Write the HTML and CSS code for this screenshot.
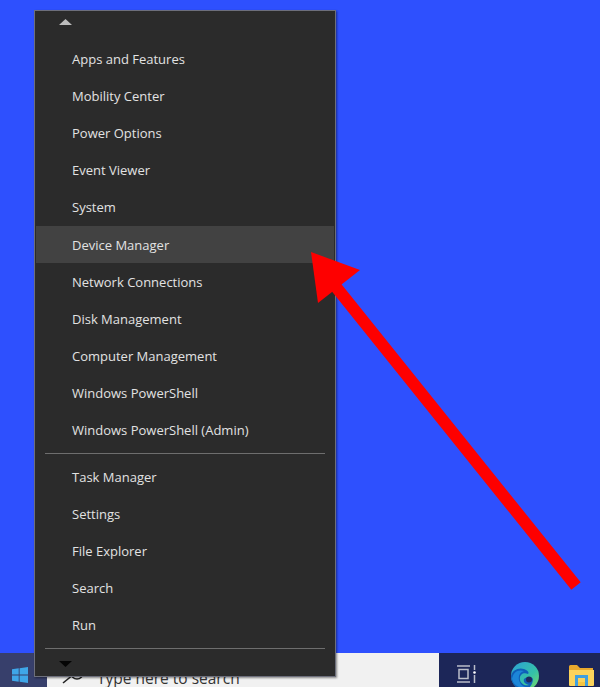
FILE: index.html
```html
<!DOCTYPE html>
<html lang="en">
<head>
<meta charset="utf-8">
<title>Quick Link menu</title>
<link rel="stylesheet" href="styles.css">
</head>
<body>
<div class="desktop">
  <nav class="menu">
    <div class="scroll scroll-up"><svg class="tri" width="13" height="6" viewBox="0 0 13 6"><path d="M6.500 0 13 6H0z" fill="#bdbdbd"/></svg></div>
    <ul class="group">
      <li>Apps and Features</li>
      <li>Mobility Center</li>
      <li>Power Options</li>
      <li>Event Viewer</li>
      <li>System</li>
      <li class="active">Device Manager</li>
      <li>Network Connections</li>
      <li>Disk Management</li>
      <li>Computer Management</li>
      <li>Windows PowerShell</li>
      <li>Windows PowerShell (Admin)</li>
    </ul>
    <hr class="sep">
    <ul class="group">
      <li>Task Manager</li>
      <li>Settings</li>
      <li>File Explorer</li>
      <li>Search</li>
      <li>Run</li>
    </ul>
    <hr class="sep sep-last">
    <div class="scroll scroll-down"><svg class="tri" width="13" height="6" viewBox="0 0 13 6"><path d="M0 0H13L6.500 6z" fill="#050505"/></svg></div>
  </nav>
  <footer class="taskbar">
    <div class="start">
      <svg width="16" height="16" viewBox="0 0 16 16"><path d="M0 2.300 6.700 1.300V7.500H0zM7.600 1.200 16 0V7.500H7.600zM0 8.400H6.700V14.700L0 13.700zM7.600 8.400H16V16L7.600 14.800z" fill="#3fa6e8"/></svg>
    </div>
    <div class="search">
      <svg class="lens" width="22" height="14" viewBox="0 0 22 14"><path d="M1 12 9 5.500" stroke="#222" stroke-width="1.600" fill="none"/><circle cx="15" cy="2" r="6" stroke="#222" stroke-width="1.600" fill="none"/></svg>
      <span class="placeholder">Type here to search</span>
    </div>
    <div class="tray">
      <svg class="task" width="21" height="18" viewBox="0 0 21 18"><g fill="none" stroke="#b9bdc9" stroke-width="1.500"><path d="M0 1H13M2 4.500H11V13.500H2zM0 17H13"/><path d="M17.500 0V5M17.500 10V18"/></g><circle cx="17.500" cy="7.500" r="1.300" fill="#fff"/></svg>
      <svg class="edge" width="28" height="28" viewBox="0 0 28 28">
        <defs>
          <linearGradient id="edgeTop" x1="0" y1="0" x2="1" y2="1"><stop offset="0" stop-color="#2c9fd8"/><stop offset="0.600" stop-color="#35c1a8"/><stop offset="1" stop-color="#7fdc62"/></linearGradient>
        </defs>
        <circle cx="14" cy="14" r="14" fill="url(#edgeTop)"/>
        <path d="M13 17C17 14 21 15 22 17 22 22 18 28 13 28 6 28 0 22 0 14 1 8 8 5 13 7 18 9 18 11 17 12 12 10 8 13 9 18 10 22 14 24 18 23 14 22 12 20 13 17z" fill="#0f5fb8"/>
        <path d="M1 17C2 10 7 7 13 9 9 10 7 14 8 18 9 22 12 25 15 25 11 27 3 25 1 17z" fill="#1c86d8"/>
        <circle cx="18" cy="17.500" r="3" fill="#1e2a5e"/>
      </svg>
      <svg class="folder" width="25" height="22" viewBox="0 0 25 22"><path d="M0 1.500Q0 0 1.500 0H8L11 3H24V7H0z" fill="#e8a92e"/><path d="M0 5H25V20Q25 21 24 21H1Q0 21 0 20z" fill="#fbd35b"/><path d="M6 10H19V21H16V13H9V21H6z" fill="#3f9fe0"/><path d="M9 17H16V21H9z" fill="#f5c542"/></svg>
    </div>
  </footer>
  <svg class="arrow" width="600" height="687" viewBox="0 0 600 687"><path d="M576 586 332 282" stroke="#fe0000" stroke-width="12" fill="none"/><path d="M311 252 360 270 318 303z" fill="#fe0000"/></svg>
</div>
</body>
</html>
```
FILE: styles.css
```css
* { box-sizing: border-box; }
html, body { margin: 0; padding: 0; }
body { width: 600px; height: 687px; overflow: hidden; font-family: "Open Sans", "Noto Sans", sans-serif; }
.desktop { position: relative; width: 600px; height: 687px; background: #2e50fe; display: flex; flex-direction: column; justify-content: flex-end; }
.menu { position: absolute; left: 34px; top: 10px; width: 302px; height: 667px; background: #2b2b2b; border: 1px solid #6d6f7c; box-shadow: 1px 1px 2px rgba(0,0,0,.45); display: flex; flex-direction: column; padding: 1px; }
.scroll { height: 20px; padding-left: 23px; display: flex; align-items: center; flex: none; }
.scroll-up { height: 20px; }
.group { list-style: none; margin: 0; padding: 0; flex: none; }
.scroll-up + .group { margin-top: 8px; }
.group li { height: 37.200px; padding-left: 36px; display: flex; align-items: center; color: #e2e2e2; font-size: 13px; }
.group li.active { background: #424242; }
.sep { flex: none; height: 1px; margin: 4px 9px 4px; border: 0; background: #6e6e6e; }
.sep-last { margin: 3.500px 9px 5px; }
.taskbar { height: 34px; display: flex; background: #1c2658; flex: none; }
.start { width: 47px; display: flex; align-items: flex-start; background: #373f6b; padding: 14px 0 0 12px; }
.search { width: 392px; background: #f1f1f1; display: flex; align-items: flex-start; padding: 18px 0 0 15px; gap: 13px; }
.lens { flex: none; }
.placeholder { font-size: 15.500px; line-height: 16px; color: #333; white-space: nowrap; margin-top: -1px; }
.tray { flex: 1; display: flex; align-items: flex-start; padding: 12px 0 0 18px; }
.task { flex: none; }
.edge { flex: none; margin: -3px 0 0 33px; }
.folder { flex: none; margin: 0 0 0 30px; }
.arrow { position: absolute; left: 0; top: 0; pointer-events: none; }
```
